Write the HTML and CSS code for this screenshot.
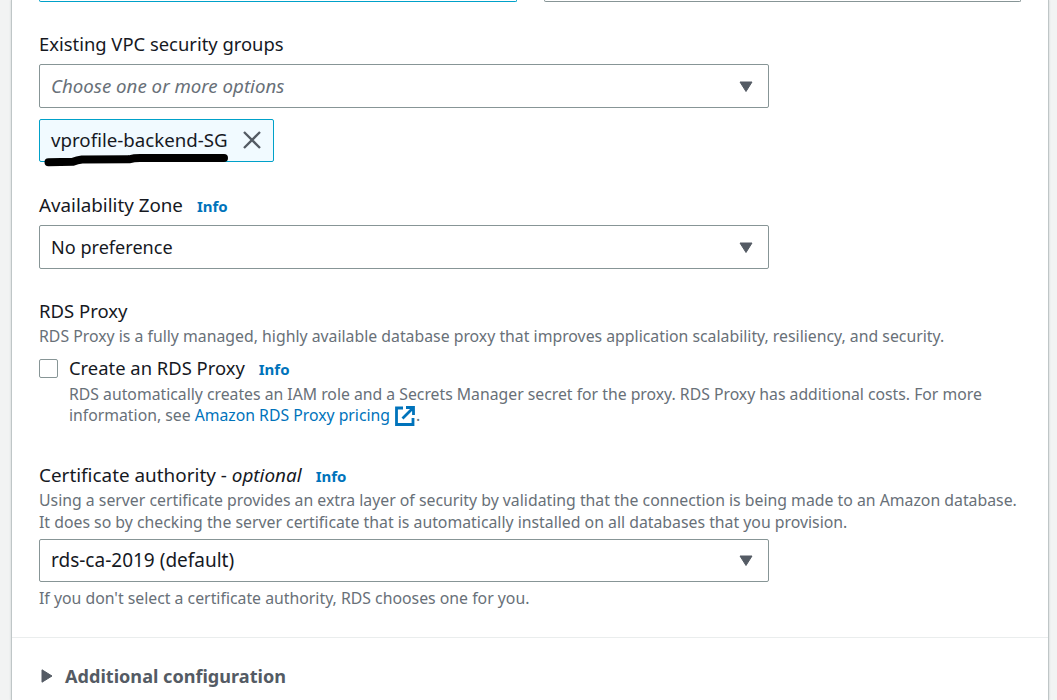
FILE: index.html
```html
<!DOCTYPE html>
<html lang="en">
<head>
<meta charset="utf-8">
<title>Connectivity</title>
<link rel="stylesheet" href="styles.css">
</head>
<body>
<main class="panel">
  <div class="tiles"><div class="tile tile-selected"></div><div class="tile"></div></div>

  <section class="field field-groups">
    <div class="label"><span class="t-groups">Existing VPC security groups</span></div>
    <div class="select"><span class="placeholder">Choose one or more options</span><svg class="caret" viewBox="0 0 16 12"><path d="M2 1h12L8 10.5z"/></svg></div>
    <div class="token">
      <span class="t-token">vprofile-backend-SG</span>
      <svg class="close" viewBox="0 0 20 20"><path d="M2 2l16 16M18 2L2 18"/></svg>
      <svg class="marker" viewBox="0 0 190 16"><path d="M5.500 9.200L30 8.800Q34 7.200 39 6.500L86 6.300Q91 5 97 5L181 5"/></svg>
    </div>
  </section>

  <section class="field field-zone">
    <div class="label"><span class="t-zone">Availability Zone</span><a class="info">Info</a></div>
    <div class="select"><span class="t-nopref">No preference</span><svg class="caret" viewBox="0 0 16 12"><path d="M2 1h12L8 10.5z"/></svg></div>
  </section>

  <section class="field field-proxy">
    <div class="label"><span class="t-proxy">RDS Proxy</span></div>
    <p class="desc">RDS Proxy is a fully managed, highly available database proxy that improves application scalability, resiliency, and security.</p>
    <div class="check-row">
      <span class="checkbox"></span>
      <div>
        <div class="label"><span class="t-create">Create an RDS Proxy</span><a class="info">Info</a></div>
        <p class="desc desc-tight">RDS automatically creates an IAM role and a Secrets Manager secret for the proxy. RDS Proxy has additional costs. For more<br>information, see <a class="link">Amazon RDS Proxy pricing</a><svg class="external" viewBox="0 0 20 20"><path d="M8 2H1.500v16.500H18V12M11 1.500h7.500V9M18 2L7.500 12.500"/></svg>.</p>
      </div>
    </div>
  </section>

  <section class="field field-cert">
    <div class="label"><span class="t-cert">Certificate authority - <em>optional</em></span><a class="info">Info</a></div>
    <p class="desc">Using a server certificate provides an extra layer of security by validating that the connection is being made to an Amazon database.<br>It does so by checking the server certificate that is automatically installed on all databases that you provision.</p>
    <div class="select select-cert"><span class="t-ca">rds-ca-2019 (default)</span><svg class="caret" viewBox="0 0 16 12"><path d="M2 1h12L8 10.5z"/></svg></div>
    <p class="desc helper">If you don't select a certificate authority, RDS chooses one for you.</p>
  </section>

  <section class="expander">
    <svg class="arrow" viewBox="0 0 12 16"><path d="M1 1.800v12.400L11 8z"/></svg>
    <span class="t-add">Additional configuration</span>
  </section>
</main>
</body>
</html>
```

FILE: styles.css
```css
* { box-sizing: border-box; }
html, body { height: 100%; overflow: hidden; }
body { margin: 0; background: #f2f3f3; font: 18px/24px "Noto Sans", sans-serif; color: #16191f; }
p { margin: 0; }
svg { flex: none; }
.panel { width: 1038px; height: 700px; margin-left: 11px; background: #fff; border: solid #bfc6c7; border-width: 0 1px; box-shadow: 0 0 2px #c8cdce; display: flex; flex-direction: column; }
.tiles { display: flex; gap: 27px; height: 2px; padding: 0 27px; flex: none; }
.tile { flex: 1; border: 1px solid #879596; border-top: 0; border-radius: 0 0 2px 2px; }
.tile-selected { border-color: #00a1c9; }
.field { padding: 0 27px; flex: none; white-space: nowrap; }
.label { height: 24px; display: flex; align-items: center; white-space: pre; }
.field-groups { padding-top: 30px; }
.field-zone { padding-top: 31px; }
.field-proxy { padding-top: 30px; }
.field-cert { padding-top: 37px; }
.select { width: 730px; height: 44px; border: 1px solid #879596; border-radius: 2px; display: flex; align-items: center; justify-content: space-between; padding: 0 14px 0 11px; }
.field-groups .select { margin-top: 8px; }
.field-zone .select { margin-top: 8px; }
.field-cert .select-cert { height: 43px; margin-top: 6px; padding-bottom: 1px; }
.placeholder { font-size: 18.700px; font-style: italic; color: #687078; }
.caret { width: 16px; height: 12px; margin-top: 1px; fill: #545b64; stroke: #545b64; stroke-width: 1; stroke-linejoin: round; }
.token { position: relative; width: 235px; height: 43px; margin-top: 11px; padding: 0 11px 2px 11px; border: 1px solid #00a1c9; border-radius: 2px; background: #f1faff; display: flex; align-items: center; justify-content: space-between; }
.close { width: 20px; height: 20px; fill: none; stroke: #545b64; stroke-width: 2.300; }
.marker { position: absolute; left: 3px; top: 33px; width: 190px; height: 16px; fill: none; stroke: #000; stroke-width: 8; stroke-linecap: round; stroke-linejoin: round; }
.info { margin-left: 14px; color: #0073bb; font-size: 15px; font-weight: 700; position: relative; top: 1px; }
.link { color: #0073bb; }
.desc { font-size: 15.820px; line-height: 22px; color: #687078; margin-top: 2px; }
.desc-tight { font-size: 15.770px; line-height: 21px; margin-top: 4px; }
.check-row { display: flex; gap: 11px; margin-top: 9px; }
.checkbox { width: 19px; height: 19px; margin-top: 3px; border: 1px solid #879596; border-radius: 2px; flex: none; }
.external { width: 20px; height: 20px; margin: 0 1px 0 5px; vertical-align: -5px; fill: none; stroke: #0073bb; stroke-width: 2.800; }
.helper { margin-top: 5px; }
.expander { margin-top: 28px; border-top: 1px solid #eaeded; padding: 26px 28px 0; display: flex; align-items: center; gap: 12px; color: #545b64; font-weight: 700; }
.arrow { width: 12px; height: 16px; margin-left: 1px; fill: #545b64; stroke: #545b64; stroke-linejoin: round; }

.t-groups { font-size: 18.400px; }
.t-token { font-size: 18.700px; }
.t-zone { font-size: 18.800px; }
.t-nopref { font-size: 18.100px; }
.t-proxy { font-size: 18.500px; }
.t-create { font-size: 18.400px; }
.t-cert { font-size: 18.900px; }
.t-ca { font-size: 19px; }
.t-add { font-size: 18.100px; }
```
